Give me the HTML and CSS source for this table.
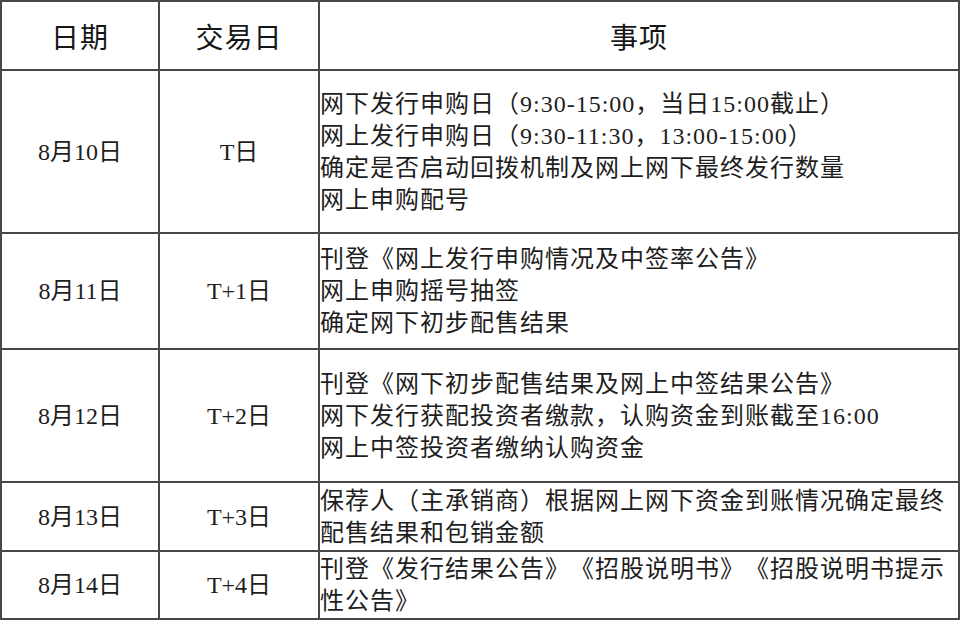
FILE: index.html
```html
<!DOCTYPE html>
<html lang="zh-CN">
<head>
<meta charset="utf-8">
<title>发行安排</title>
<link rel="stylesheet" href="styles.css">
</head>
<body>
<table class="sched">
  <colgroup>
    <col class="c-date">
    <col class="c-day">
    <col class="c-item">
  </colgroup>
  <thead>
    <tr class="r-head">
      <th>日期</th>
      <th>交易日</th>
      <th>事项</th>
    </tr>
  </thead>
  <tbody>
    <tr class="r1">
      <td class="center">8月10日</td>
      <td class="center">T日</td>
      <td class="item">网下发行申购日（9:30-15:00，当日15:00截止）<br>网上发行申购日（9:30-11:30，13:00-15:00）<br>确定是否启动回拨机制及网上网下最终发行数量<br>网上申购配号</td>
    </tr>
    <tr class="r2">
      <td class="center">8月11日</td>
      <td class="center">T+1日</td>
      <td class="item">刊登《网上发行申购情况及中签率公告》<br>网上申购摇号抽签<br>确定网下初步配售结果</td>
    </tr>
    <tr class="r3">
      <td class="center">8月12日</td>
      <td class="center">T+2日</td>
      <td class="item">刊登《网下初步配售结果及网上中签结果公告》<br>网下发行获配投资者缴款，认购资金到账截至16:00<br>网上中签投资者缴纳认购资金</td>
    </tr>
    <tr class="r4">
      <td class="center">8月13日</td>
      <td class="center">T+3日</td>
      <td class="item">保荐人（主承销商）根据网上网下资金到账情况确定最终<br>配售结果和包销金额</td>
    </tr>
    <tr class="r5">
      <td class="center">8月14日</td>
      <td class="center">T+4日</td>
      <td class="item">刊登《发行结果公告》《招股说明书》《招股说明书提示<br>性公告》</td>
    </tr>
  </tbody>
</table>
</body>
</html>
```
FILE: styles.css
```css
html, body {
  margin: 0;
  padding: 0;
  background: #ffffff;
}

body {
  font-family: "Liberation Serif", "Noto Sans CJK SC", serif;
  color: #1e1e1e;
  text-spacing-trim: space-all;
}

.sched {
  border-collapse: collapse;
  width: 958px;
  table-layout: fixed;
}

.c-date { width: 158px; }
.c-day { width: 160px; }
.c-item { width: 640px; }

.sched th,
.sched td {
  border: 2px solid #474747;
  padding: 0;
  vertical-align: middle;
}

.sched th {
  font-size: 28px;
  font-weight: normal;
  letter-spacing: 1px;
  text-align: center;
  color: #161616;
}

.sched td {
  font-size: 24px;
  line-height: 32px;
}

.center {
  text-align: center;
}

.item {
  text-align: left;
  padding-left: 4px;
  letter-spacing: 1px;
  white-space: nowrap;
  text-spacing-trim: space-all;
}

.r-head { height: 69px; }
.r1 { height: 163px; }
.r2 { height: 116px; }
.r3 { height: 133px; }
.r4 { height: 69px; }
.r5 { height: 68px; }
```
